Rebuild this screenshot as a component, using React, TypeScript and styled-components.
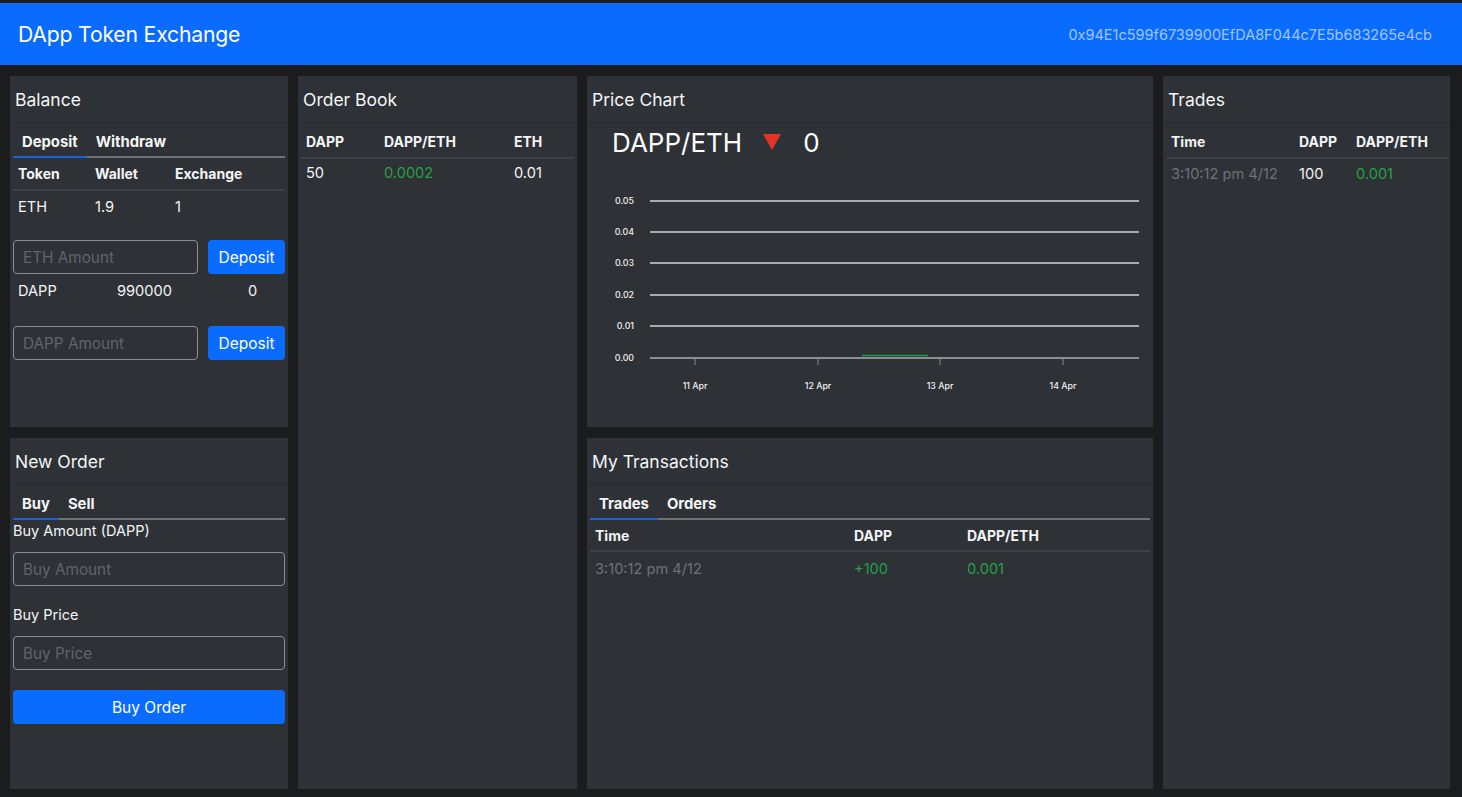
import React from 'react';
import styled, { createGlobalStyle } from 'styled-components';

const Global = createGlobalStyle`
  html, body { margin: 0; padding: 0; background: #1b1c1e; }
  body { font-family: Inter, "Liberation Sans", sans-serif; color: #f4f5f6; }
  * { box-sizing: border-box; }
`;

const BLUE = '#0a6cfe';
const GREEN = '#27a046';
const GRAY = '#6c737b';

const Page = styled.div`
  width: 1462px;
  height: 797px;
  padding-top: 3px;
  background: #1b1c1e;
  overflow: hidden;
`;

const Navbar = styled.header`
  height: 62px;
  background: ${BLUE};
  display: flex;
  align-items: center;
  justify-content: space-between;
  padding: 0 30px 0 18px;
`;

const Brand = styled.div`
  font-size: 21.2px;
  color: #fff;
  letter-spacing: -0.2px;
`;

const Address = styled.div`
  font-size: 14.5px;
  color: rgba(255, 255, 255, 0.62);
`;

const Grid = styled.main`
  display: grid;
  grid-template-columns: 278px 279px 566px 287px;
  grid-template-rows: 351px 351px;
  column-gap: 10px;
  row-gap: 11px;
  padding: 11px 0 0 10px;
`;

const Card = styled.section<{ $span?: boolean }>`
  background: #2e3135;
  display: flex;
  flex-direction: column;
  grid-row: ${(p) => (p.$span ? 'span 2' : 'auto')};
`;

const CardHeader = styled.h2`
  margin: 0;
  height: 47px;
  padding: 0 5px;
  display: flex;
  align-items: center;
  font-size: 17.5px;
  font-weight: 400;
  color: #f4f5f6;
  border-bottom: 1px solid #282b2e;
`;

const CardBody = styled.div<{ $pt?: number }>`
  padding: ${(p) => p.$pt ?? 0}px 3px 0;
  display: flex;
  flex-direction: column;
  font-size: 14.6px;
`;

const TabBar = styled.nav`
  display: flex;
  height: 35px;
  border-bottom: 2px solid #6f7276;
`;

const Tab = styled.div<{ $active?: boolean }>`
  padding: 4px 9px 0;
  display: flex;
  align-items: center;
  font-weight: 700;
  font-size: 14.8px;
  color: #f4f5f6;
  border-bottom: 2px solid ${(p) => (p.$active ? '#1a62d0' : 'transparent')};
  margin-bottom: -2px;
`;

const Row = styled.div<{ $cols: string; $h: number; $head?: boolean }>`
  display: grid;
  grid-template-columns: ${(p) => p.$cols};
  height: ${(p) => p.$h}px;
  align-items: center;
  font-weight: ${(p) => (p.$head ? 700 : 400)};
  font-size: ${(p) => (p.$head ? 14 : 14.6)}px;
  border-bottom: ${(p) => (p.$head ? '2px solid #3d4145' : 'none')};
`;

const Cell = styled.span<{ $tone?: 'green' | 'gray' }>`
  padding: 0 5px;
  white-space: nowrap;
  color: ${(p) => (p.$tone === 'green' ? GREEN : p.$tone === 'gray' ? GRAY : '#f4f5f6')};
`;

const FormRow = styled.div<{ $mt: number }>`
  display: flex;
  gap: 10px;
  margin-top: ${(p) => p.$mt}px;
`;

const Input = styled.input`
  flex: 1;
  min-width: 0;
  height: 34px;
  border: 1.5px solid #8b8e92;
  border-radius: 4px;
  background: transparent;
  padding: 0 9px;
  font-family: inherit;
  font-size: 15.3px;
  color: #fff;
  outline: none;
  &::placeholder { color: #5f656c; }
`;

const Button = styled.button<{ $full?: boolean }>`
  width: ${(p) => (p.$full ? '100%' : '77px')};
  height: 34px;
  border: none;
  border-radius: 4px;
  background: ${BLUE};
  color: #fff;
  font-family: inherit;
  font-size: 15.5px;
  cursor: pointer;
`;

const Label = styled.label<{ $mt: number }>`
  display: block;
  margin-top: ${(p) => p.$mt}px;
  line-height: 22px;
  font-size: 14.5px;
  color: #f4f5f6;
`;

const Spacer = styled.div<{ $h: number }>`
  height: ${(p) => p.$h}px;
`;

const PairHeader = styled.div`
  height: 38px;
  display: flex;
  align-items: center;
  padding: 0 0 0 22px;
  font-size: 26px;
  color: #fff;
`;

const PairName = styled.span`
  margin-right: 21px;
`;

const PairPrice = styled.span`
  margin-left: 22px;
`;

const ChartSvg = styled.svg`
  display: block;
`;

const Triangle = () => (
  <svg width="18" height="16" viewBox="0 0 18 16">
    <polygon points="0,0 18,0 9,16" fill="#e5332a" />
  </svg>
);

const gridYs = [40, 71, 102, 134, 165, 197];
const yLabels = ['0.05', '0.04', '0.03', '0.02', '0.01', '0.00'];
const xTicks = [
  { x: 105, l: '11 Apr' },
  { x: 228, l: '12 Apr' },
  { x: 350, l: '13 Apr' },
  { x: 473, l: '14 Apr' },
];

const chartFont = "Inter, 'Liberation Sans', sans-serif";

const PriceChart = () => (
  <ChartSvg width="560" height="264" viewBox="0 0 560 264">
    {gridYs.map((y, i) => (
      <g key={y}>
        <line x1="60" x2="549" y1={y} y2={y} stroke={i === 5 ? '#aab0b6' : '#d2d3d5'} strokeWidth="1.5" />
        <text x="44" y={y + 3} textAnchor="end" fontSize="8.8" fontWeight="500" fill="#f0f0f0" fontFamily={chartFont}>
          {yLabels[i]}
        </text>
      </g>
    ))}
    {xTicks.map((t) => (
      <g key={t.l}>
        <line x1={t.x} x2={t.x} y1="198" y2="204" stroke="#7e8a93" strokeWidth="1" />
        <text x={t.x} y="228" textAnchor="middle" fontSize="8.8" fontWeight="500" fill="#f0f0f0" fontFamily={chartFont}>
          {t.l}
        </text>
      </g>
    ))}
    <line x1="272" x2="338" y1="194.5" y2="194.5" stroke="#1f9a4a" strokeWidth="1.5" />
  </ChartSvg>
);

export default function App() {
  return (
    <>
      <Global />
      <Page>
        <Navbar>
          <Brand>DApp Token Exchange</Brand>
          <Address>0x94E1c599f6739900EfDA8F044c7E5b683265e4cb</Address>
        </Navbar>
        <Grid>
          <Card>
            <CardHeader>Balance</CardHeader>
            <CardBody>
              <TabBar>
                <Tab $active>Deposit</Tab>
                <Tab>Withdraw</Tab>
              </TabBar>
              <Row $head $cols="77px 80px 1fr" $h={33}>
                <Cell>Token</Cell>
                <Cell>Wallet</Cell>
                <Cell>Exchange</Cell>
              </Row>
              <Row $cols="77px 80px 1fr" $h={31}>
                <Cell>ETH</Cell>
                <Cell>1.9</Cell>
                <Cell>1</Cell>
              </Row>
              <FormRow $mt={18}>
                <Input placeholder="ETH Amount" />
                <Button>Deposit</Button>
              </FormRow>
              <Row $cols="99px 131px 1fr" $h={34}>
                <Cell>DAPP</Cell>
                <Cell>990000</Cell>
                <Cell>0</Cell>
              </Row>
              <FormRow $mt={18}>
                <Input placeholder="DAPP Amount" />
                <Button>Deposit</Button>
              </FormRow>
            </CardBody>
          </Card>

          <Card $span>
            <CardHeader>Order Book</CardHeader>
            <CardBody $pt={3}>
              <Row $head $cols="78px 130px 1fr" $h={33}>
                <Cell>DAPP</Cell>
                <Cell>DAPP/ETH</Cell>
                <Cell>ETH</Cell>
              </Row>
              <Row $cols="78px 130px 1fr" $h={28}>
                <Cell>50</Cell>
                <Cell $tone="green">0.0002</Cell>
                <Cell>0.01</Cell>
              </Row>
            </CardBody>
          </Card>

          <Card>
            <CardHeader>Price Chart</CardHeader>
            <CardBody>
              <PairHeader>
                <PairName>DAPP/ETH</PairName>
                <Triangle />
                <PairPrice>0</PairPrice>
              </PairHeader>
              <PriceChart />
            </CardBody>
          </Card>

          <Card $span>
            <CardHeader>Trades</CardHeader>
            <CardBody $pt={3}>
              <Row $head $cols="128px 57px 1fr" $h={33}>
                <Cell>Time</Cell>
                <Cell>DAPP</Cell>
                <Cell>DAPP/ETH</Cell>
              </Row>
              <Row $cols="128px 57px 1fr" $h={30}>
                <Cell $tone="gray">3:10:12 pm 4/12</Cell>
                <Cell>100</Cell>
                <Cell $tone="green">0.001</Cell>
              </Row>
            </CardBody>
          </Card>

          <Card>
            <CardHeader>New Order</CardHeader>
            <CardBody>
              <TabBar>
                <Tab $active>Buy</Tab>
                <Tab>Sell</Tab>
              </TabBar>
              <Label $mt={0}>Buy Amount (DAPP)</Label>
              <FormRow $mt={10}>
                <Input placeholder="Buy Amount" />
              </FormRow>
              <Label $mt={18}>Buy Price</Label>
              <FormRow $mt={10}>
                <Input placeholder="Buy Price" />
              </FormRow>
              <Spacer $h={20} />
              <Button $full>Buy Order</Button>
            </CardBody>
          </Card>

          <Card>
            <CardHeader>My Transactions</CardHeader>
            <CardBody>
              <TabBar>
                <Tab $active>Trades</Tab>
                <Tab>Orders</Tab>
              </TabBar>
              <Row $head $cols="259px 113px 1fr" $h={32}>
                <Cell>Time</Cell>
                <Cell>DAPP</Cell>
                <Cell>DAPP/ETH</Cell>
              </Row>
              <Row $cols="259px 113px 1fr" $h={33}>
                <Cell $tone="gray">3:10:12 pm 4/12</Cell>
                <Cell $tone="green">+100</Cell>
                <Cell $tone="green">0.001</Cell>
              </Row>
            </CardBody>
          </Card>
        </Grid>
      </Page>
    </>
  );
}
